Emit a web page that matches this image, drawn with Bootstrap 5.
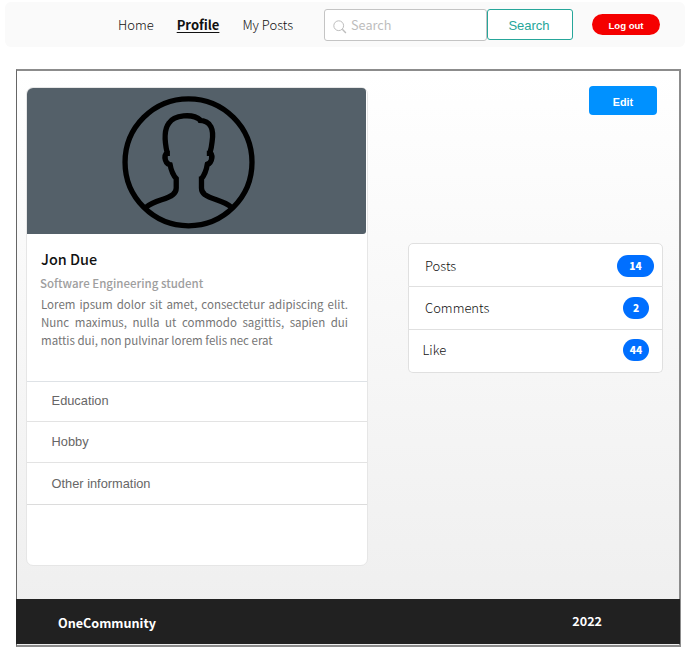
<!DOCTYPE html>
<html lang="en">
<head>
<meta charset="utf-8">
<meta name="viewport" content="width=device-width, initial-scale=1">
<title>OneCommunity</title>
<link rel="stylesheet" href="https://cdn.jsdelivr.net/npm/bootstrap@5.3.0/dist/css/bootstrap.min.css">
<style>
body{font-family:"Noto Sans CJK SC","Source Sans Pro",sans-serif;font-size:13px;line-height:20px;color:#333;background:#fff;overflow:hidden}
.arial{font-family:"Liberation Sans",Arial,sans-serif}
.topbar{height:45px;margin:2px 2px 0 5px;background:#fafafa;border-radius:6px}
.topbar .nav-link{color:#111;padding:0;white-space:nowrap;font-weight:300}
.topbar .nav-link.active{color:#111;font-weight:700;text-decoration:underline;text-underline-offset:2px;text-decoration-thickness:1px}
.menu{width:319px;padding-left:113px;gap:23px}
.search-box{width:163px;height:32px;border:1px solid #c4c4c4;border-radius:3px;background:#fff;padding-left:8px}
.search-box input{font-size:12.7px;line-height:20px;padding:0;border:0;background:none;color:#333;box-shadow:none!important}
.search-box input::placeholder{color:#bdbdbd;opacity:1}
.btn-find{width:86px;height:31px;padding:0 2px 0 0;border:1px solid #26a69a;border-radius:3px;background:#fff;color:#26a69a;font-size:13px;line-height:31px}
.btn-exit{width:68px;height:21px;padding:0;background:#f50000;color:#fff;font-size:9.6px;font-weight:700;line-height:21px;margin-left:19px}
.menu,.totals{font-size:13px}
.frame{margin:22px 6px 0 16px;height:578px;border:2px solid #8c8c8c;border-left:1px solid #666;background:linear-gradient(#fff,#eee)}
.main-area{height:528px;padding:16px 16px 0 9px}
.profile{width:342px;height:479px;border:1px solid #e6e6e6;border-radius:7px;background:#fff}
.cover{height:146px;background:#546069;border-radius:6px 4px 3px 0;margin-right:1px}
.bio{height:147px;padding:15px 19px 0 14px;color:#757575}
.bio h1{font-size:14.4px;line-height:20px;font-weight:500;color:#111;margin:0}
.bio h2{font-size:11.5px;line-height:18px;font-weight:500;color:#9e9e9e;margin:5px 0 3px -1px}
.bio p{font-size:11.5px;line-height:18px;text-align:justify;margin:0}
.facts .list-group-item{height:41px;padding:0 24.6px;border-color:#e3e3e3;color:#666;font-size:12.8px;line-height:40px;background:none}
.facts .list-group-item:first-child{height:40px;line-height:38px}
.facts .list-group-item:last-child{height:42px;line-height:42px;border-bottom:1px solid #dcdcdc}
.btn-edit{width:68px;height:29px;background:#0091ff;border-radius:4px;padding:0;font-size:10.8px;font-weight:700;line-height:31px;color:#fff;margin:-1px 6px 0 0}
.totals{width:255px;margin-top:128px;border-radius:5px}
.totals .list-group-item{height:43px;padding:0 8px 0 16px;border-color:#e0e0e0;color:#111;font-weight:300}
.totals .list-group-item:first-child{height:44px;padding-top:1px}
.totals .item-like{padding-left:13.5px;padding-bottom:3px}
.totals .badge{background:#006fff;height:22px;width:26px;margin-right:5px;padding:0;font-size:10.2px;line-height:22px;font-weight:900}
.totals .list-group-item:first-child .badge{width:37px;margin-right:0}
.foot{height:45px;margin-left:-1px;margin-right:-1px;background:#212121;color:#fff;font-size:12.6px;font-weight:700;padding:3px 78px 0 42px}
.foot .year{padding-bottom:4px}
</style>
<script src="https://cdn.jsdelivr.net/npm/bootstrap@5.3.0/dist/js/bootstrap.bundle.min.js"></script>
</head>
<body>
<nav class="topbar d-flex align-items-center">
  <div class="menu nav flex-nowrap">
    <a class="nav-link" href="#">Home</a>
    <a class="nav-link active" href="#">Profile</a>
    <a class="nav-link" href="#">My Posts</a>
  </div>
  <form class="d-flex align-items-center">
    <div class="search-box d-flex align-items-center gap-1">
      <svg width="14" height="14" viewBox="0 0 14 14" fill="none" stroke="#bdbdbd" class="flex-shrink-0 mt-1"><circle cx="5.7" cy="5.7" r="4.9"/><path d="M9.3 9.3l3.6 3.7" stroke-width="1.4"/></svg>
      <input class="form-control" type="text" placeholder="Search" aria-label="Search">
    </div>
    <button class="btn btn-find arial" type="button">Search</button>
  </form>
  <button class="btn btn-exit rounded-pill arial" type="button">Log out</button>
</nav>

<div class="frame">
  <main class="main-area d-flex justify-content-between align-items-start">
    <section class="profile">
      <div class="cover">
        <svg class="d-block w-100 h-100" viewBox="49 24 1020 438" fill="none" stroke="#000" stroke-width="16">
          <circle cx="535" cy="247" r="191"/>
          <path d="M407 382C434 360 468 360 488 344Q498 336 498 324V292M499 297C487 285 482 269 479 251M486 255C463 255 459 227 471 218M479 220H471C463 185 462 147 476 129C491 105 547 98 572 121M564 121C606 120 611 152 606 184Q604 204 599 220H590M600 216C611 230 604 254 585 255M592 250C589 270 584 285 573 297M574 290V324Q574 336 584 344C606 360 640 361 664 382"/>
        </svg>
      </div>
      <div class="bio">
        <h1>Jon Due</h1>
        <h2>Software Engineering student</h2>
        <p>Lorem ipsum dolor sit amet, consectetur adipiscing elit. Nunc maximus, nulla ut commodo sagittis, sapien dui mattis dui, non pulvinar lorem felis nec erat</p>
      </div>
      <ul class="list-group list-group-flush facts arial border-top">
        <li class="list-group-item">Education</li>
        <li class="list-group-item">Hobby</li>
        <li class="list-group-item">Other information</li>
      </ul>
    </section>
    <aside class="d-flex flex-column align-items-end">
      <button class="btn btn-edit arial" type="button">Edit</button>
      <ul class="list-group totals">
        <li class="list-group-item d-flex justify-content-between align-items-center">Posts<span class="badge rounded-pill">14</span></li>
        <li class="list-group-item d-flex justify-content-between align-items-center">Comments<span class="badge rounded-pill">2</span></li>
        <li class="list-group-item item-like d-flex justify-content-between align-items-center">Like<span class="badge rounded-pill">44</span></li>
      </ul>
    </aside>
  </main>
  <footer class="foot d-flex justify-content-between align-items-center"><span>OneCommunity</span><span class="year">2022</span></footer>
</div>
</body>
</html>
